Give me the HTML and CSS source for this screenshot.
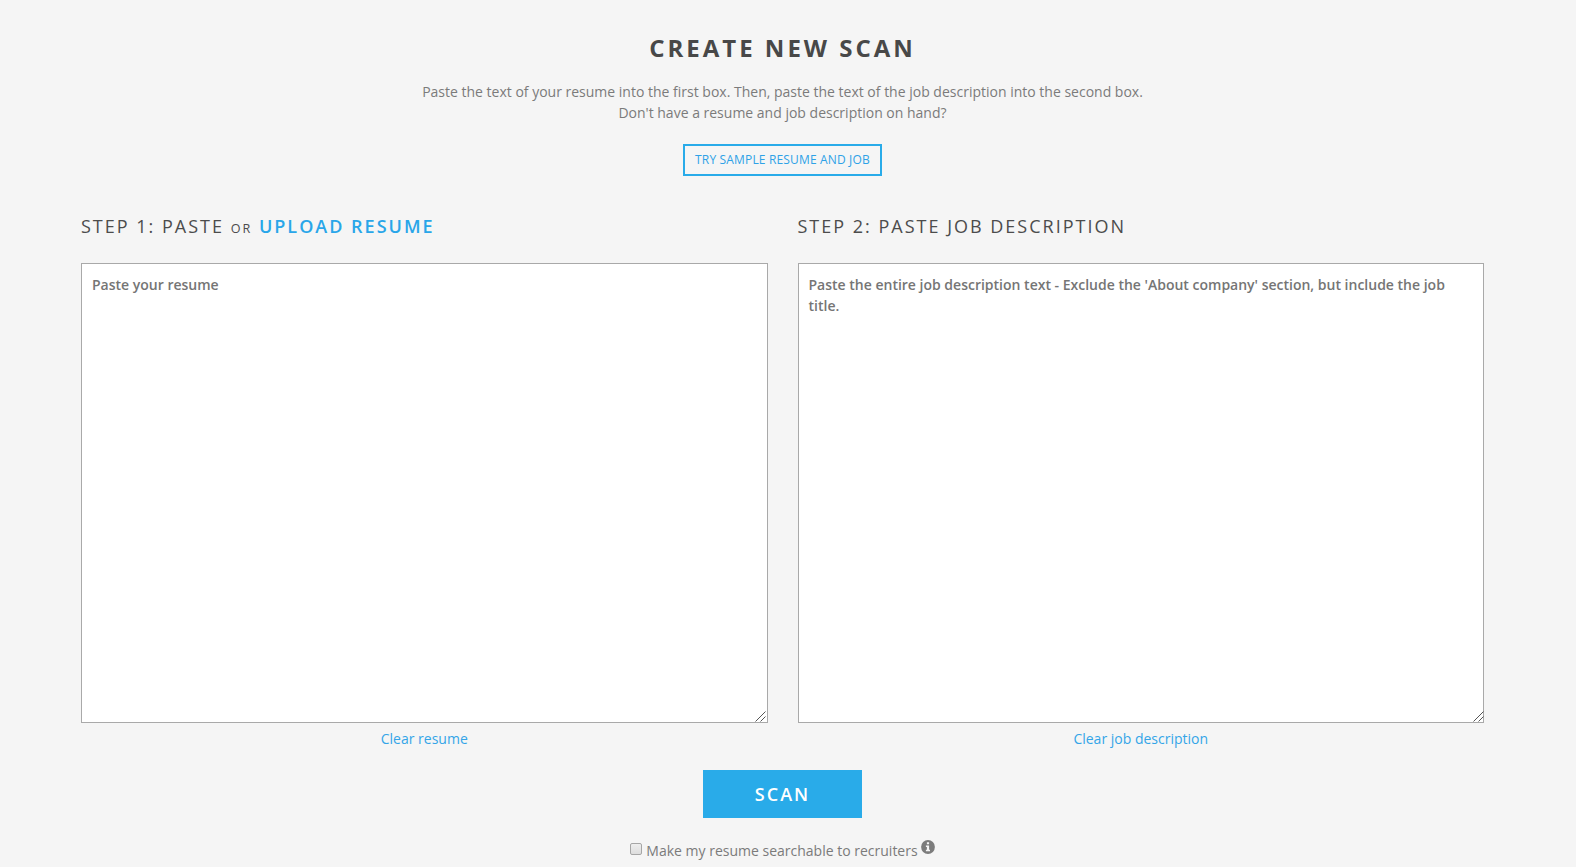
FILE: index.html
```html
<!DOCTYPE html>
<html lang="en">
<head>
<meta charset="utf-8">
<title>Create New Scan</title>
<link rel="stylesheet" href="styles.css">
</head>
<body>
<main class="page">
  <h1 class="title">CREATE NEW SCAN</h1>
  <p class="intro">Paste the text of your resume into the first box. Then, paste the text of the job description into the second box.<br>Don't have a resume and job description on hand?</p>
  <button class="sample">TRY SAMPLE RESUME AND JOB</button>
  <div class="columns">
    <section class="column">
      <h2 class="step">STEP 1: PASTE <small class="or">OR</small> <a class="upload">UPLOAD RESUME</a></h2>
      <div class="field">
        <textarea class="box" placeholder="Paste your resume"></textarea>
        <svg class="grip" viewBox="0 0 11 11"><path d="M.5 10.500l10-10M5.500 10.500l5-5"/></svg>
      </div>
      <a class="clear">Clear resume</a>
    </section>
    <section class="column">
      <h2 class="step">STEP 2: PASTE JOB DESCRIPTION</h2>
      <div class="field">
        <textarea class="box" placeholder="Paste the entire job description text - Exclude the 'About company' section, but include the job title."></textarea>
        <svg class="grip grip-edge" viewBox="0 0 11 11"><path d="M.5 10.500l10-10M5.500 10.500l5-5"/></svg>
      </div>
      <a class="clear">Clear job description</a>
    </section>
  </div>
  <button class="scan">SCAN</button>
  <div class="search">
    <span class="check"></span>
    <span class="label">Make my resume searchable to recruiters</span>
    <svg class="info" viewBox="0 0 14 14"><circle cx="7" cy="7" r="6.9" fill="#7c7c7c"/><path d="M5.900 2.300h2.200v1.900H5.900zM4.900 5.600h3.200v4.100H9v1.500H4.900V9.700h1V7.100h-1z" fill="#f5f5f5"/></svg>
  </div>
</main>
</body>
</html>
```
FILE: styles.css
```css
* { box-sizing: border-box; }
body { margin: 0; height: 867px; overflow: hidden; background: #f5f5f5; color: #7b7b7b; font: 14px/21px "Open Sans", sans-serif; }
.page { width: 1403px; margin-left: 81px; display: flex; flex-direction: column; align-items: center; }
.title { margin: 32px 0 0; color: #484848; font-size: 24px; line-height: 31px; font-weight: 700; letter-spacing: 3px; }
.intro { margin: 18px 0 0; text-align: center; }
.sample { width: 199px; height: 32px; margin-top: 21px; padding: 0; border: 2px solid #29abe9; background: transparent; color: #2ea2e7; font: 500 12px/28px "Open Sans", sans-serif; letter-spacing: .16px; white-space: nowrap; }
.columns { width: 100%; margin-top: 35px; display: grid; grid-template-columns: 1fr 1fr; gap: 30px; }
.column { display: flex; flex-direction: column; align-items: center; }
.step { align-self: stretch; height: 30px; margin: 0 0 22px; color: #4c4c4c; font-size: 18px; line-height: 30px; font-weight: 400; letter-spacing: 2px; white-space: nowrap; }
.or { font-size: 12.6px; line-height: 1; }
.upload { color: #29a6e9; font-weight: 600; }
.field { position: relative; align-self: stretch; height: 460px; }
.box { display: block; width: 100%; height: 100%; margin: 0; padding: 10px; border: 1px solid #a9a9a9; border-radius: 0; background: #fff; resize: none; font: 600 14px/21px "Open Sans", sans-serif; }
.box::placeholder { color: #757575; }
.grip { position: absolute; right: 1.5px; bottom: 1.5px; width: 11px; height: 11px; fill: none; stroke: #555; stroke-width: 1; }
.grip-edge { right: 0; }
.clear { margin-top: 5px; color: #34a5e8; }
.scan { width: 159px; height: 48px; margin-top: 21px; padding: 0; border: 0; background: #29abe9; color: #fff; font: 600 18px/48px "Open Sans", sans-serif; letter-spacing: 2px; }
.search { margin-top: 22px; display: flex; align-items: flex-start; }
.check { width: 12px; height: 12px; margin: 3px 4px 0 0; border: 1px solid #a6a6a6; border-radius: 2px; background: linear-gradient(#eee, #ddd); }
.info { width: 14px; height: 14px; margin: 0 0 0 3px; }
```
